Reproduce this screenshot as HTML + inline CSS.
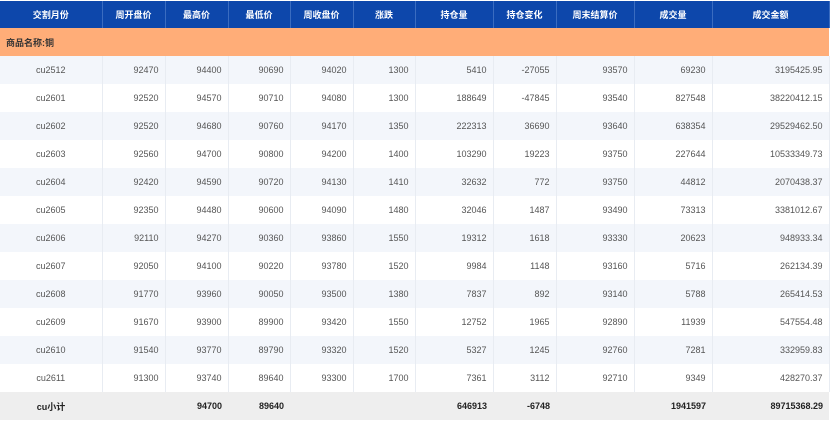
<!DOCTYPE html><html><head><meta charset="utf-8"><style>
body{margin:0;background:#fff;width:831px;height:424px;overflow:hidden;font-family:"Liberation Sans","Noto Sans CJK SC",sans-serif;}
table{position:absolute;left:0;top:1px;border-collapse:collapse;table-layout:fixed;width:829px;font-size:9px;color:#555;}
td,th{height:28px;padding:0 6px;text-align:right;border-right:1px solid #e8ecf2;box-sizing:border-box;white-space:nowrap;overflow:hidden}
th{background:#0d47ab;color:#fff;text-align:center;font-weight:bold;height:27px;border-right:1px solid #3a6cc0;font-size:9px}
td:first-child{text-align:center}
tr.o td{background:#ffad78;color:#333;font-weight:bold;text-align:left;padding-left:6px;border:none}
tr.s td{background:#f3f6fb}
tr.t td{background:#eeeeee;color:#222;font-weight:bold;border-right:none;height:28px}
</style></head><body>
<table>
<colgroup><col style="width:102px"><col style="width:63px"><col style="width:63px"><col style="width:62px"><col style="width:63px"><col style="width:62px"><col style="width:78px"><col style="width:63px"><col style="width:78px"><col style="width:78px"><col style="width:117px"></colgroup>
<tr><th>交割月份</th><th>周开盘价</th><th>最高价</th><th>最低价</th><th>周收盘价</th><th>涨跌</th><th>持仓量</th><th>持仓变化</th><th>周末结算价</th><th>成交量</th><th>成交金额</th></tr>
<tr class="o"><td colspan="11">商品名称:铜</td></tr>
<tr class="s"><td>cu2512</td><td>92470</td><td>94400</td><td>90690</td><td>94020</td><td>1300</td><td>5410</td><td>-27055</td><td>93570</td><td>69230</td><td>3195425.95</td></tr>
<tr><td>cu2601</td><td>92520</td><td>94570</td><td>90710</td><td>94080</td><td>1300</td><td>188649</td><td>-47845</td><td>93540</td><td>827548</td><td>38220412.15</td></tr>
<tr class="s"><td>cu2602</td><td>92520</td><td>94680</td><td>90760</td><td>94170</td><td>1350</td><td>222313</td><td>36690</td><td>93640</td><td>638354</td><td>29529462.50</td></tr>
<tr><td>cu2603</td><td>92560</td><td>94700</td><td>90800</td><td>94200</td><td>1400</td><td>103290</td><td>19223</td><td>93750</td><td>227644</td><td>10533349.73</td></tr>
<tr class="s"><td>cu2604</td><td>92420</td><td>94590</td><td>90720</td><td>94130</td><td>1410</td><td>32632</td><td>772</td><td>93750</td><td>44812</td><td>2070438.37</td></tr>
<tr><td>cu2605</td><td>92350</td><td>94480</td><td>90600</td><td>94090</td><td>1480</td><td>32046</td><td>1487</td><td>93490</td><td>73313</td><td>3381012.67</td></tr>
<tr class="s"><td>cu2606</td><td>92110</td><td>94270</td><td>90360</td><td>93860</td><td>1550</td><td>19312</td><td>1618</td><td>93330</td><td>20623</td><td>948933.34</td></tr>
<tr><td>cu2607</td><td>92050</td><td>94100</td><td>90220</td><td>93780</td><td>1520</td><td>9984</td><td>1148</td><td>93160</td><td>5716</td><td>262134.39</td></tr>
<tr class="s"><td>cu2608</td><td>91770</td><td>93960</td><td>90050</td><td>93500</td><td>1380</td><td>7837</td><td>892</td><td>93140</td><td>5788</td><td>265414.53</td></tr>
<tr><td>cu2609</td><td>91670</td><td>93900</td><td>89900</td><td>93420</td><td>1550</td><td>12752</td><td>1965</td><td>92890</td><td>11939</td><td>547554.48</td></tr>
<tr class="s"><td>cu2610</td><td>91540</td><td>93770</td><td>89790</td><td>93320</td><td>1520</td><td>5327</td><td>1245</td><td>92760</td><td>7281</td><td>332959.83</td></tr>
<tr><td>cu2611</td><td>91300</td><td>93740</td><td>89640</td><td>93300</td><td>1700</td><td>7361</td><td>3112</td><td>92710</td><td>9349</td><td>428270.37</td></tr>
<tr class="t"><td>cu小计</td><td></td><td>94700</td><td>89640</td><td></td><td></td><td>646913</td><td>-6748</td><td></td><td>1941597</td><td>89715368.29</td></tr>
</table>
</body></html>
